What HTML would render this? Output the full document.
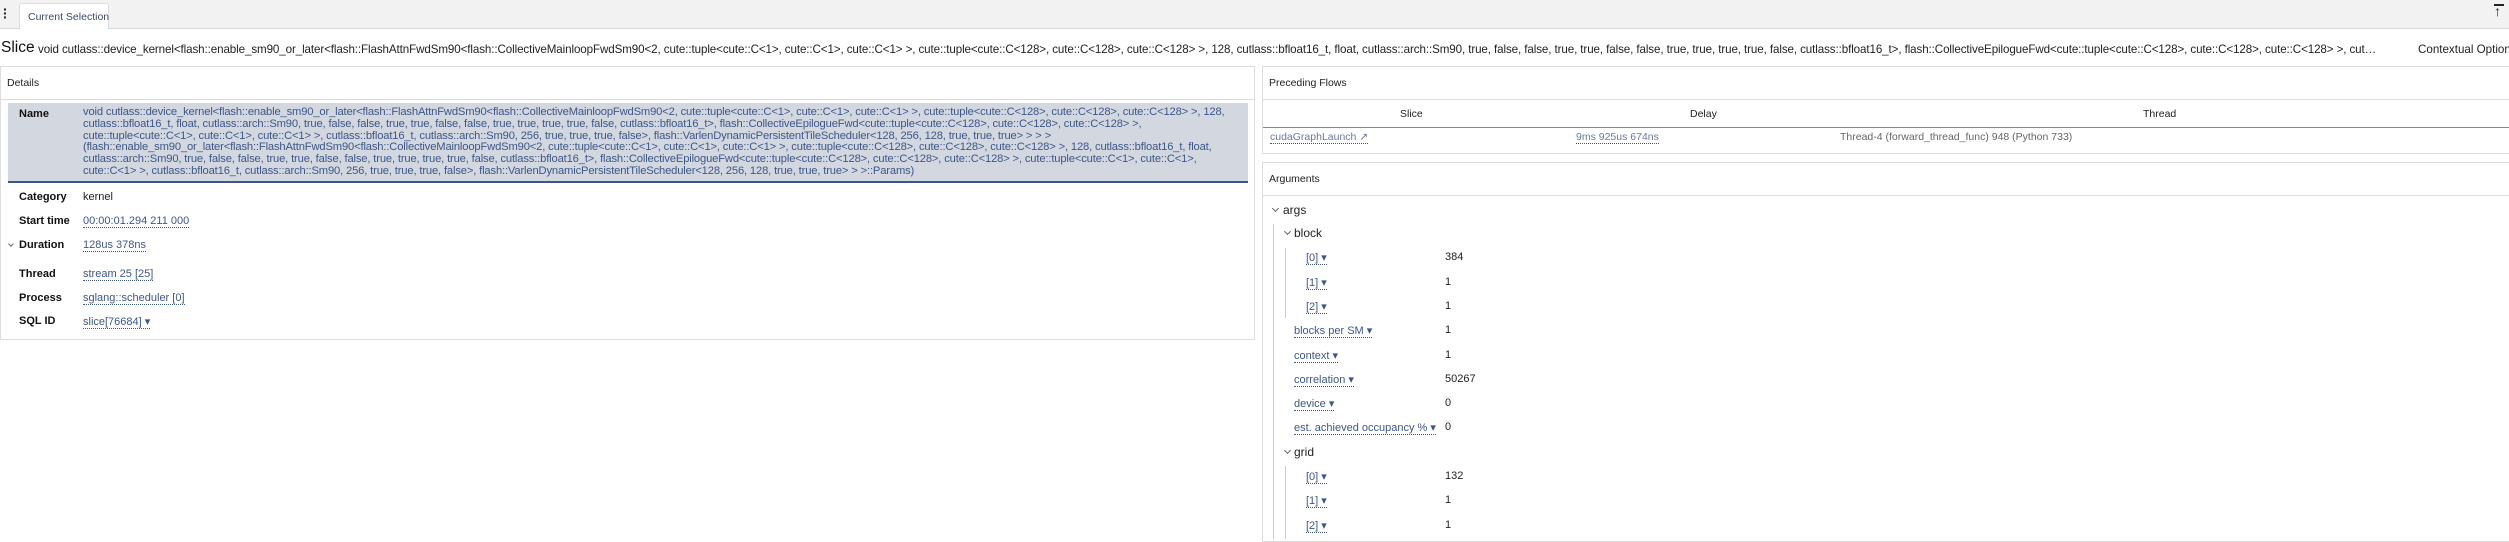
<!DOCTYPE html>
<html><head><meta charset="utf-8"><style>
*{box-sizing:border-box;margin:0;padding:0}
body{width:2509px;height:539px;overflow:hidden;background:#fff;font-family:"Liberation Sans",sans-serif;color:#222;position:relative;font-size:11px}
.abs{position:absolute;white-space:nowrap}
.topbar{position:absolute;left:0;top:0;width:2509px;height:29px;background:#f2f2f2;border-bottom:1px solid #d8d8d8}
.tab{position:absolute;left:19px;top:3px;width:90px;height:26px;background:#fff;border:1px solid #ddd;border-bottom:none;border-radius:3px 3px 0 0;font-size:10.5px;color:#3a4a66;padding:7px 0 0 8px;white-space:nowrap}
.panel{position:absolute;border:1px solid #ddd;background:#fff}
.hdr{position:absolute;left:0;right:0;height:33px;border-bottom:1px solid #ddd;font-size:10.5px;padding:10px 0 0 6px;color:#222}
.lbl{position:absolute;font-weight:bold;font-size:11px;color:#111;white-space:nowrap}
.lnk{color:#3d5688;border-bottom:1px dotted #3d5688}
.val{position:absolute;font-size:11px;white-space:nowrap}
.namebox{position:absolute;left:8px;top:103px;width:1240px;height:80px;background:#d3d8e0;border-bottom:2px solid #3d5688}
.nametext{position:absolute;left:75px;top:4px;font-size:11.2px;line-height:11.8px;color:#3d5688;white-space:nowrap;letter-spacing:-0.15px}
.arg{position:absolute;font-size:11px;white-space:nowrap}
.chev{position:absolute;width:5px;height:5px;border-right:1px solid #666;border-bottom:1px solid #666;transform:rotate(45deg)}
.vl{position:absolute;width:1px;background:#ccc}
</style></head><body>
<div class="topbar"></div>
<div class="abs" style="left:3px;top:7px;font-size:14px;line-height:4px;font-weight:bold">·<br>·<br>·</div>
<div class="tab">Current Selection</div>
<div class="abs" style="left:2494px;top:4px;width:10px;border-top:2px solid #222"></div>
<div class="abs" style="left:2494px;top:3px;font-size:14px;font-weight:bold">↑</div>

<div class="abs" style="left:1px;top:39px;font-size:15.5px;color:#111">Slice</div>
<div class="abs" style="left:38px;top:43px;width:2340px;overflow:hidden;text-overflow:ellipsis;font-size:11.6px;color:#222;letter-spacing:-0.1px">void cutlass::device_kernel&lt;flash::enable_sm90_or_later&lt;flash::FlashAttnFwdSm90&lt;flash::CollectiveMainloopFwdSm90&lt;2, cute::tuple&lt;cute::C&lt;1&gt;, cute::C&lt;1&gt;, cute::C&lt;1&gt; &gt;, cute::tuple&lt;cute::C&lt;128&gt;, cute::C&lt;128&gt;, cute::C&lt;128&gt; &gt;, 128, cutlass::bfloat16_t, float, cutlass::arch::Sm90, true, false, false, true, true, false, false, true, true, true, true, false, cutlass::bfloat16_t&gt;, flash::CollectiveEpilogueFwd&lt;cute::tuple&lt;cute::C&lt;128&gt;, cute::C&lt;128&gt;, cute::C&lt;128&gt; &gt;, cute::tuple&lt;cute::C&lt;1&gt;, cute::C&lt;1&gt;, cute::C&lt;1&gt; &gt;, cutlass::bfloat16_t, cutlass::arch::Sm90, 256, true</div>
<div class="abs" style="left:2418px;top:43px;font-size:11.6px;color:#222">Contextual Options</div>

<div class="panel" style="left:0;top:66px;width:1255px;height:274px">
 <div class="hdr" style="top:0">Details</div>
</div>
<div class="namebox"><div class="lbl" style="left:11px;top:5px">Name</div>
<div class="nametext">void cutlass::device_kernel&lt;flash::enable_sm90_or_later&lt;flash::FlashAttnFwdSm90&lt;flash::CollectiveMainloopFwdSm90&lt;2, cute::tuple&lt;cute::C&lt;1&gt;, cute::C&lt;1&gt;, cute::C&lt;1&gt; &gt;, cute::tuple&lt;cute::C&lt;128&gt;, cute::C&lt;128&gt;, cute::C&lt;128&gt; &gt;, 128,<br>cutlass::bfloat16_t, float, cutlass::arch::Sm90, true, false, false, true, true, false, false, true, true, true, true, false, cutlass::bfloat16_t&gt;, flash::CollectiveEpilogueFwd&lt;cute::tuple&lt;cute::C&lt;128&gt;, cute::C&lt;128&gt;, cute::C&lt;128&gt; &gt;,<br>cute::tuple&lt;cute::C&lt;1&gt;, cute::C&lt;1&gt;, cute::C&lt;1&gt; &gt;, cutlass::bfloat16_t, cutlass::arch::Sm90, 256, true, true, true, false&gt;, flash::VarlenDynamicPersistentTileScheduler&lt;128, 256, 128, true, true, true&gt; &gt; &gt; &gt;<br>(flash::enable_sm90_or_later&lt;flash::FlashAttnFwdSm90&lt;flash::CollectiveMainloopFwdSm90&lt;2, cute::tuple&lt;cute::C&lt;1&gt;, cute::C&lt;1&gt;, cute::C&lt;1&gt; &gt;, cute::tuple&lt;cute::C&lt;128&gt;, cute::C&lt;128&gt;, cute::C&lt;128&gt; &gt;, 128, cutlass::bfloat16_t, float,<br>cutlass::arch::Sm90, true, false, false, true, true, false, false, true, true, true, true, false, cutlass::bfloat16_t&gt;, flash::CollectiveEpilogueFwd&lt;cute::tuple&lt;cute::C&lt;128&gt;, cute::C&lt;128&gt;, cute::C&lt;128&gt; &gt;, cute::tuple&lt;cute::C&lt;1&gt;, cute::C&lt;1&gt;,<br>cute::C&lt;1&gt; &gt;, cutlass::bfloat16_t, cutlass::arch::Sm90, 256, true, true, true, false&gt;, flash::VarlenDynamicPersistentTileScheduler&lt;128, 256, 128, true, true, true&gt; &gt; &gt;::Params)</div></div>

<div class="lbl" style="left:19px;top:191px">Category</div><div class="val" style="left:83px;top:191px">kernel</div>
<div class="lbl" style="left:19px;top:215px">Start time</div><div class="val" style="left:83px;top:215px"><span class="lnk">00:00:01.294 211 000</span></div>
<div class="chev" style="left:9px;top:242px;width:4px;height:4px"></div>
<div class="lbl" style="left:19px;top:239px">Duration</div><div class="val" style="left:83px;top:239px"><span class="lnk">128us 378ns</span></div>
<div class="lbl" style="left:19px;top:268px">Thread</div><div class="val" style="left:83px;top:268px"><span class="lnk">stream 25 [25]</span></div>
<div class="lbl" style="left:19px;top:292px">Process</div><div class="val" style="left:83px;top:292px"><span class="lnk">sglang::scheduler [0]</span></div>
<div class="lbl" style="left:19px;top:315px">SQL ID</div><div class="val" style="left:83px;top:315px"><span class="lnk">slice[76684] ▾</span></div>

<div class="panel" style="left:1262px;top:66px;width:1250px;height:88px">
 <div class="hdr" style="top:0">Preceding Flows</div>
 <div class="abs" style="left:0;right:0;top:60px;border-top:1px solid #889"></div>
</div>
<div class="val" style="left:1400px;top:108px;font-size:10.5px">Slice</div>
<div class="val" style="left:1690px;top:108px;font-size:10.5px">Delay</div>
<div class="val" style="left:2143px;top:108px;font-size:10.5px">Thread</div>
<div class="val" style="left:1270px;top:131px;font-size:10.5px"><span class="lnk" style="color:#6a7aa0">cudaGraphLaunch ↗</span></div>
<div class="val" style="left:1576px;top:131px;font-size:10.5px"><span class="lnk" style="color:#6a7aa0">9ms 925us 674ns</span></div>
<div class="val" style="left:1840px;top:131px;font-size:10.5px;color:#666">Thread-4 (forward_thread_func) 948 (Python 733)</div>

<div class="panel" style="left:1262px;top:162px;width:1250px;height:380px">
 <div class="hdr" style="top:0">Arguments</div>
</div>
<div class="vl" style="left:1273px;top:224px;height:315px"></div>
<div class="vl" style="left:1285px;top:248px;height:70px"></div>
<div class="vl" style="left:1285px;top:466px;height:73px"></div>
<div class="chev" style="left:1273px;top:206px"></div><div class="arg" style="left:1283px;top:203px;font-size:12px">args</div>
<div class="chev" style="left:1285px;top:229px"></div><div class="arg" style="left:1294px;top:226px;font-size:12px">block</div>
<div class="arg" style="left:1306px;top:251px"><span class="lnk">[0] ▾</span></div><div class="arg" style="left:1445px;top:251px">384</div>
<div class="arg" style="left:1306px;top:276px"><span class="lnk">[1] ▾</span></div><div class="arg" style="left:1445px;top:276px">1</div>
<div class="arg" style="left:1306px;top:300px"><span class="lnk">[2] ▾</span></div><div class="arg" style="left:1445px;top:300px">1</div>
<div class="arg" style="left:1294px;top:324px"><span class="lnk">blocks per SM ▾</span></div><div class="arg" style="left:1445px;top:324px">1</div>
<div class="arg" style="left:1294px;top:349px"><span class="lnk">context ▾</span></div><div class="arg" style="left:1445px;top:349px">1</div>
<div class="arg" style="left:1294px;top:373px"><span class="lnk">correlation ▾</span></div><div class="arg" style="left:1445px;top:373px">50267</div>
<div class="arg" style="left:1294px;top:397px"><span class="lnk">device ▾</span></div><div class="arg" style="left:1445px;top:397px">0</div>
<div class="arg" style="left:1294px;top:421px"><span class="lnk">est. achieved occupancy % ▾</span></div><div class="arg" style="left:1445px;top:421px">0</div>
<div class="chev" style="left:1285px;top:448px"></div><div class="arg" style="left:1294px;top:445px;font-size:12px">grid</div>
<div class="arg" style="left:1306px;top:470px"><span class="lnk">[0] ▾</span></div><div class="arg" style="left:1445px;top:470px">132</div>
<div class="arg" style="left:1306px;top:494px"><span class="lnk">[1] ▾</span></div><div class="arg" style="left:1445px;top:494px">1</div>
<div class="arg" style="left:1306px;top:519px"><span class="lnk">[2] ▾</span></div><div class="arg" style="left:1445px;top:519px">1</div>
</body></html>
